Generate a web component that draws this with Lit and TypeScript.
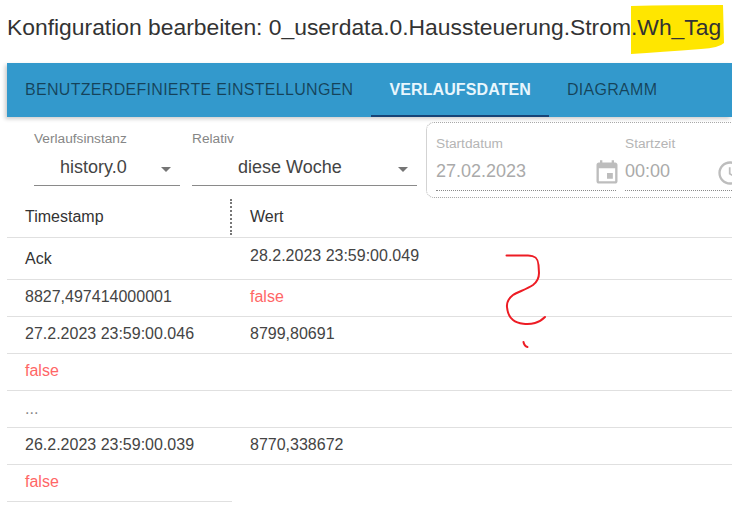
import { LitElement, html, css } from "lit";
import { customElement } from "lit/decorators.js";

const arrow = html`<svg class="arrow" viewBox="0 0 24 24"><path d="M7 10l5 5 5-5z"></path></svg>`;

@customElement("app-root")
export class AppRoot extends LitElement {
  static styles = css`
    :host { display: block; position: relative; width: 732px; height: 520px; overflow: hidden; background: #fff;
      font-family: "Liberation Sans", Arial, sans-serif; color: rgba(0,0,0,.87); }
    .title { height: 63px; box-sizing: border-box; padding: 13px 0 0 7px; font-size: 22.87px; line-height: 28px; color: #333; white-space: nowrap; position: relative; }
    .mark { position: absolute; left: 631px; top: 5px; width: 94px; height: 50px; z-index: 0; }
    .title span { position: relative; z-index: 1; }
    .body { margin-left: 7px; }
    .tabs { display: flex; height: 54px; background: #3399cc; box-shadow: -2px 2px 4px rgba(0,0,0,.2); }
    .tab { box-sizing: content-box; padding: 0 18px; line-height: 53px; font-size: 16px; letter-spacing: .3px; color: rgba(0,0,0,.56); white-space: nowrap; border-bottom: 2px solid transparent; height: 52px; }
    .tab.on { color: #e8f6fd; font-weight: 700; letter-spacing: .1px; border-bottom-color: #164477; }
    .filters { display: flex; height: 80px; box-sizing: border-box; padding: 5px 0 0 27px; }
    .sel { display: flex; flex: none; flex-direction: column; margin-right: 12px; }
    .sel label { font-size: 13.7px; line-height: 14px; color: #868686; margin: 10px 0 0; white-space: nowrap; }
    .val { display: flex; align-items: center; height: 36px; margin-top: 4px; border-bottom: 1px solid #8a8a8a; box-sizing: border-box; font-size: 18px; color: #444; }
    .val .t { flex: 1; }
    .arrow { width: 24px; height: 24px; fill: #757575; flex: none; margin: 2px 2px 0 0; }
    .s1 { width: 146px; } .s1 .t { padding-left: 26px; }
    .s2 { width: 225px; margin-right: 9px; } .s2 .t { padding-left: 46px; }
    .group { display: flex; flex: none; width: 340px; height: 76px; box-sizing: border-box; border: 1px dotted #a8a8a8; border-radius: 8px; padding: 13px 0 0 9px; gap: 9px; }
    .field { display: flex; flex: none; flex-direction: column; }
    .field label { font-size: 13.7px; line-height: 16px; color: #b5b5b5; }
    .input { display: flex; align-items: center; height: 38px; box-sizing: border-box; border-bottom: 1px dotted #8a8a8a; font-size: 18px; color: #aaa; margin-top: 1px; }
    .input .t { flex: 1; }
    .input svg { width: 28px; height: 28px; fill: #bdbdbd; flex: none; margin-top: 2px; }
    .f1 { width: 180px; } .f1 svg { margin-right: -5px; }
    .f2 { width: 119px; }
    .grid { display: grid; grid-template-columns: 225px 500px; font-size: 16px; color: #444; }
    .c { box-sizing: border-box; border-bottom: 1px solid #e0e0e0; height: 37px; padding-left: 18px; line-height: 34px; white-space: nowrap; }
    .c.h { height: 41px; line-height: 40px; color: #333; position: relative; }
    .div { position: absolute; right: 0; top: 2px; height: 36px; border-right: 2px dotted #777; }
    .c.first { height: 42px; line-height: 42px; color: #333; }
    .c.first2 { height: 42px; line-height: 36px; }
    .f { color: #ff6666; }
    .dots { color: #888; line-height: 36px; }
    .none { border-bottom: none; }
    .scribble { position: absolute; left: 0; top: 0; width: 732px; height: 520px; pointer-events: none; }
  `;

  render() {
    return html`
      <div class="title">
        <svg class="mark" viewBox="0 0 94 50"><path d="M0 1 Q40 0 92 0 L93 38 Q88 43 70 44 Q30 47 0 49Z" fill="#ffe600"></path></svg>
        <span>Konfiguration bearbeiten: 0_userdata.0.Haussteuerung.Strom.Wh_Tag</span>
      </div>
      <div class="body">
        <div class="tabs">
          <div class="tab">BENUTZERDEFINIERTE EINSTELLUNGEN</div>
          <div class="tab on">VERLAUFSDATEN</div>
          <div class="tab">DIAGRAMM</div>
        </div>
        <div class="filters">
          <div class="sel s1"><label>Verlaufsinstanz</label><div class="val"><span class="t">history.0</span>${arrow}</div></div>
          <div class="sel s2"><label>Relativ</label><div class="val"><span class="t">diese Woche</span>${arrow}</div></div>
          <div class="group">
            <div class="field f1"><label>Startdatum</label><div class="input"><span class="t">27.02.2023</span>
              <svg viewBox="0 0 24 24"><path d="M17 12h-5v5h5v-5zM16 1v2H8V1H6v2H5c-1.11 0-1.99.9-1.99 2L3 19c0 1.1.89 2 2 2h14c1.1 0 2-.9 2-2V5c0-1.1-.9-2-2-2h-1V1h-2zm3 18H5V8h14v11z"></path></svg></div></div>
            <div class="field f2"><label>Startzeit</label><div class="input"><span class="t">00:00</span>
              <svg viewBox="0 0 24 24"><path d="M11.99 2C6.47 2 2 6.48 2 12s4.47 10 9.99 10C17.52 22 22 17.52 22 12S17.52 2 11.99 2zM12 20c-4.42 0-8-3.58-8-8s3.58-8 8-8 8 3.58 8 8-3.58 8-8 8zm.5-13H11v6l5.25 3.15.75-1.23-4.5-2.67z"></path></svg></div></div>
          </div>
        </div>
        <div class="grid">
          <div class="c h">Timestamp<span class="div"></span></div><div class="c h">Wert</div>
          <div class="c first">Ack</div><div class="c first2">28.2.2023 23:59:00.049</div>
          <div class="c">8827,497414000001</div><div class="c f">false</div>
          <div class="c">27.2.2023 23:59:00.046</div><div class="c">8799,80691</div>
          <div class="c f">false</div><div class="c"></div>
          <div class="c dots">...</div><div class="c"></div>
          <div class="c">26.2.2023 23:59:00.039</div><div class="c">8770,338672</div>
          <div class="c f">false</div><div class="c none"></div>
        </div>
      </div>
      <svg class="scribble" viewBox="0 0 732 520" fill="none" stroke="#ed1c24" stroke-width="2" stroke-linecap="round">
        <path d="M506.5 255.5 L528 255.5 C535 255.5 538 258 538.5 265 L539 273 C539 279 537 282 533 285 C527 289 518 292 513 295 C508 299 506.5 302 507 307 C507.5 313 509 317 513 320 C518 324 528 325 535 323 C539 322 542 320 545 317"></path>
        <path d="M523.5 342 C524 345 525.5 346.5 527.5 347"></path>
      </svg>
    `;
  }
}
